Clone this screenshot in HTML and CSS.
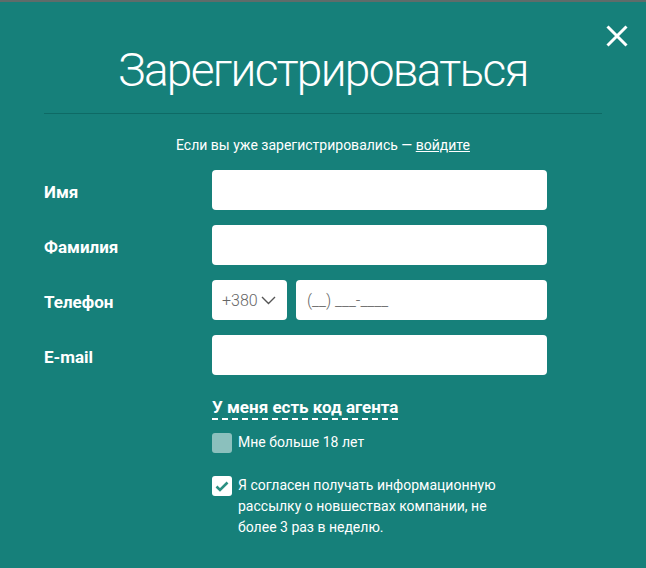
FILE: index.html
```html
<!DOCTYPE html>
<html lang="ru">
<head>
    <meta charset="UTF-8">
    <meta name="viewport" content="width=device-width, initial-scale=1.0">
    <title>Зарегистрироваться</title>
    <link rel="stylesheet" href="styles.css">
</head>
<body>
    <div class="modal">
        <button class="close" type="button" aria-label="Закрыть">
            <svg width="22" height="22" viewBox="0 0 22 22"><path d="M1.5 1.5 L20.5 20.5 M20.5 1.5 L1.5 20.5" stroke="#fff" stroke-width="3" fill="none"/></svg>
        </button>
        <h1>Зарегистрироваться</h1>
        <p class="subtitle">Если вы уже зарегистрировались — <a href="#">войдите</a></p>

        <form class="form">
            <div class="row">
                <label for="name">Имя</label>
                <input type="text" id="name">
            </div>
            <div class="row">
                <label for="surname">Фамилия</label>
                <input type="text" id="surname">
            </div>
            <div class="row">
                <label for="phone">Телефон</label>
                <div class="phone">
                    <div class="code">+380
                        <svg width="15" height="9" viewBox="0 0 15 9"><path d="M1 1 L7.5 7.5 L14 1" stroke="#555" stroke-width="1.4" fill="none"/></svg>
                    </div>
                    <input type="text" id="phone" placeholder="(__) ___-____">
                </div>
            </div>
            <div class="row">
                <label for="email">E-mail</label>
                <input type="text" id="email">
            </div>

            <div class="extra">
                <a href="#" class="agent">У меня есть код агента</a>
                <label class="check">
                    <span class="box"></span>
                    <span>Мне больше 18 лет</span>
                </label>
                <label class="check">
                    <span class="box checked">
                        <svg width="14" height="11" viewBox="0 0 14 11"><path d="M1.5 5.5 L5 9 L12.5 1.5" stroke="#2b8f82" stroke-width="2.6" fill="none"/></svg>
                    </span>
                    <span>Я согласен получать информационную рассылку о новшествах компании, не более 3 раз в неделю.</span>
                </label>
            </div>
        </form>
    </div>
</body>
</html>
```

FILE: styles.css
```css
html, body {
    margin: 0;
    padding: 0;
    height: 100%;
}
body {
    background-color: #16807a;
    border-top: 2px solid #5f6c6a;
    box-sizing: border-box;
    color: #fff;
    font-family: Roboto, "Open Sans", sans-serif;
}
.modal {
    position: relative;
    padding: 0 44px;
}
.close {
    position: absolute;
    top: 23px;
    right: 18px;
    padding: 0;
    border: none;
    background: none;
    cursor: pointer;
}
.close svg {
    display: block;
}
h1 {
    margin: 0;
    padding: 40px 0 15px;
    font-size: 46px;
    font-weight: 300;
    line-height: 56px;
    letter-spacing: -1.7px;
    text-align: center;
    border-bottom: 1px solid #0e6a65;
}
.subtitle {
    margin: 22px 0 0;
    font-size: 14px;
    line-height: 18px;
    text-align: center;
}
.subtitle a {
    color: #fff;
}
.form {
    margin-top: 16px;
}
.row {
    display: flex;
    align-items: center;
    margin-bottom: 15px;
}
.row label {
    width: 168px;
    font-size: 17px;
    font-weight: 700;
    padding-top: 3px;
}
.row input {
    width: 335px;
    height: 40px;
    box-sizing: border-box;
    border: none;
    border-radius: 4px;
    background: #fff;
    padding: 0 11px;
    font-family: Roboto, sans-serif;
    font-size: 16px;
    font-weight: 300;
    color: #555;
    outline: none;
}
.row input::placeholder {
    color: #666;
}
.phone {
    display: flex;
    gap: 9px;
}
.phone input {
    width: 251px;
}
.code {
    width: 75px;
    height: 40px;
    box-sizing: border-box;
    display: flex;
    align-items: center;
    justify-content: space-between;
    padding: 0 11px 0 10px;
    border-radius: 4px;
    background: #fff;
    color: #666;
    font-size: 16px;
    font-weight: 300;
}
.extra {
    margin-left: 168px;
    padding-top: 7px;
}
.agent {
    display: inline-block;
    color: #fff;
    font-size: 17px;
    font-weight: 700;
    text-decoration: none;
    border-bottom: 2px dashed #fff;
    padding-bottom: 1px;
}
.check {
    display: flex;
    align-items: flex-start;
    gap: 6px;
    margin-top: 12px;
    width: 300px;
    font-size: 14px;
    line-height: 21px;
}
.check + .check {
    margin-top: 22px;
}
.box {
    flex: none;
    width: 20px;
    height: 20px;
    border-radius: 3px;
    background: rgba(255, 255, 255, 0.5);
    display: flex;
    align-items: center;
    justify-content: center;
    margin-top: 1px;
}
.box.checked {
    background: #fff;
}
```
